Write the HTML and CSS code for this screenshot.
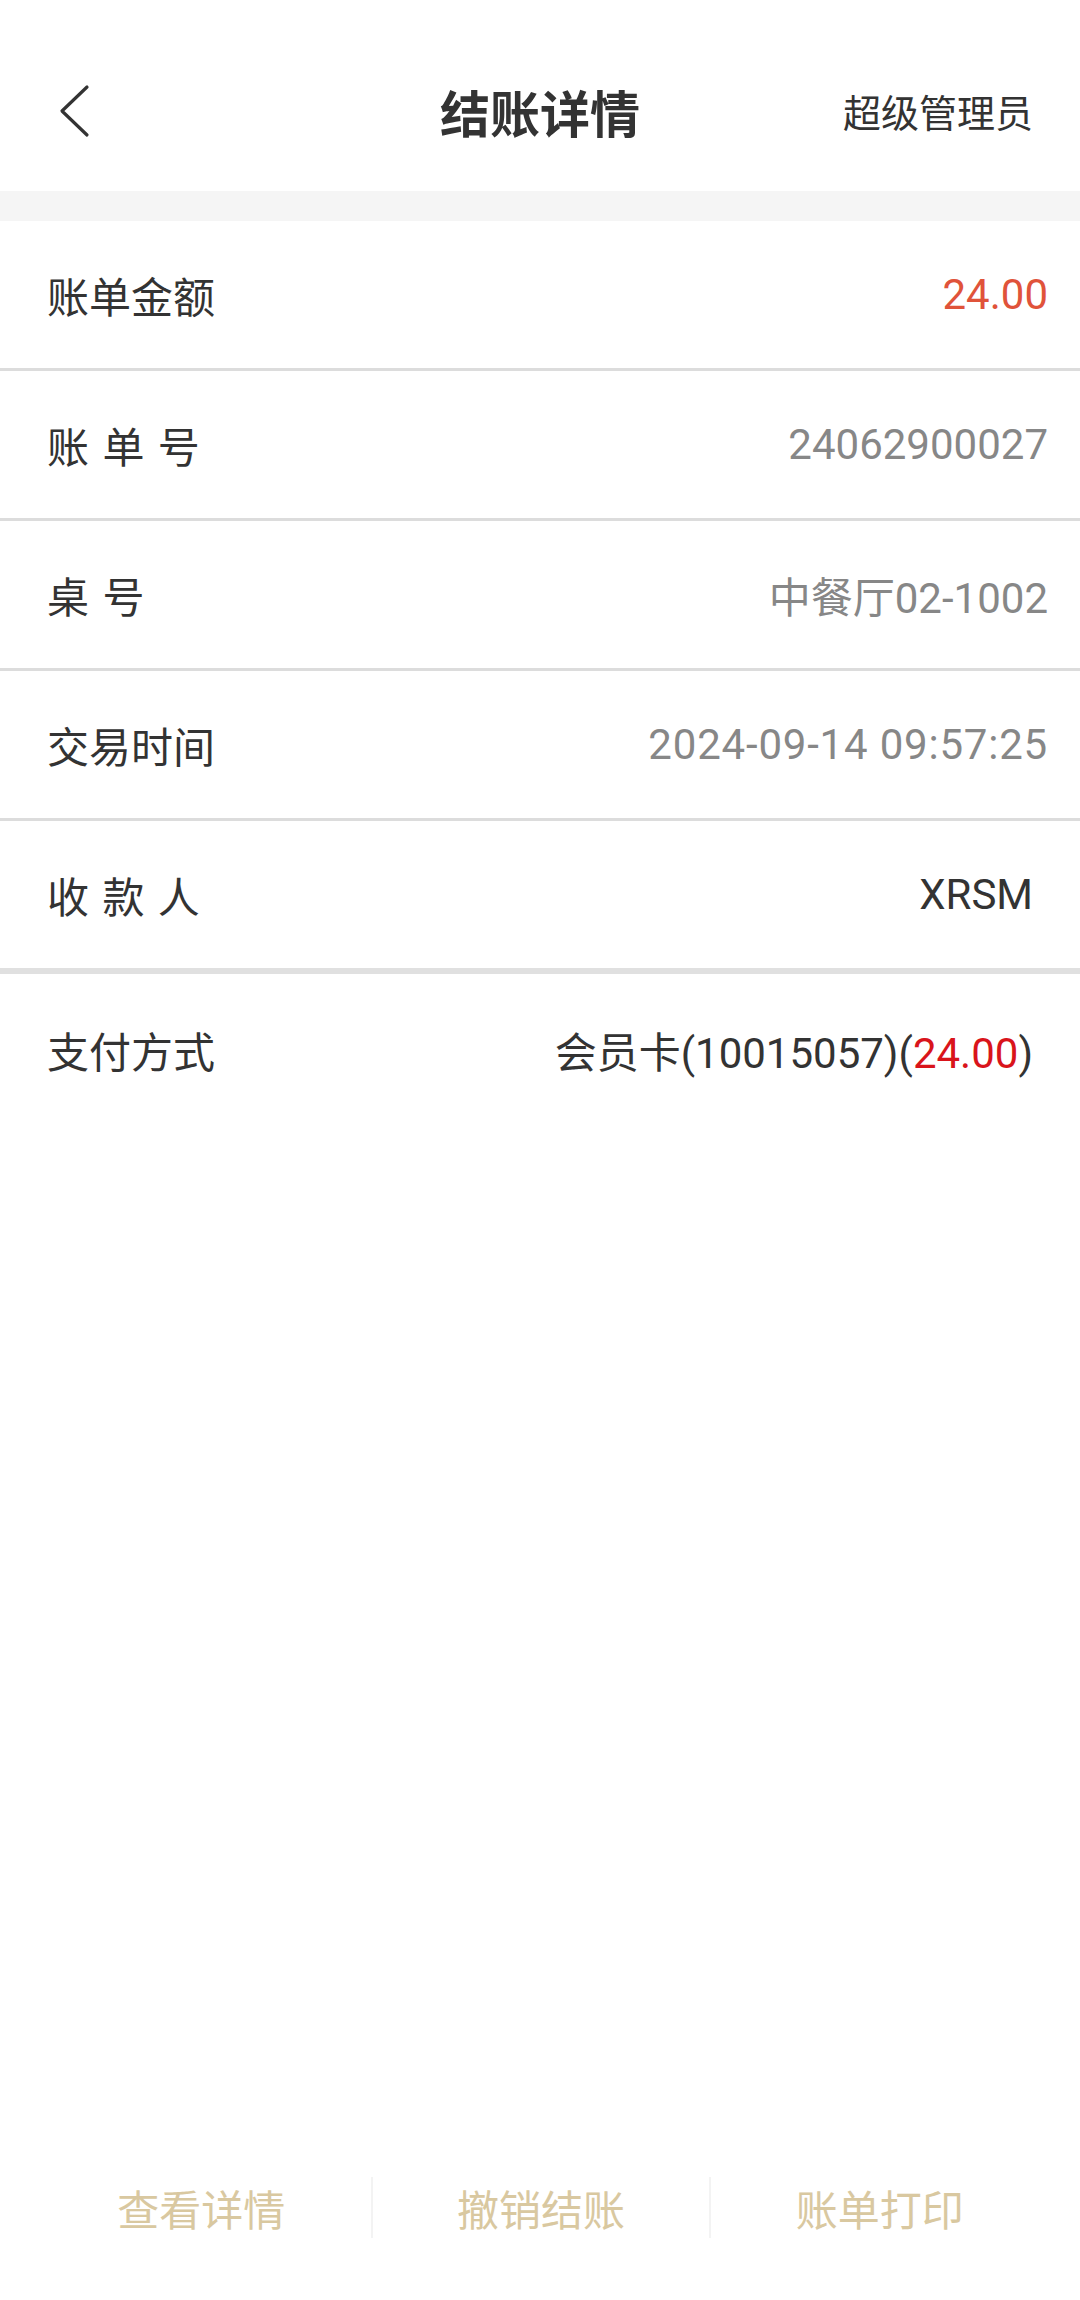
FILE: index.html
```html
<!DOCTYPE html>
<html lang="zh-CN">
<head>
    <meta charset="utf-8">
    <meta name="viewport" content="width=device-width, initial-scale=1.0">
    <title>结账详情</title>
    <link rel="stylesheet" href="styles.css">
</head>
<body>
    <div class="page">
        <header class="topbar">
            <div class="back">
                <svg width="32" height="54" viewBox="0 0 32 54">
                    <polyline points="28,3 3,27 28,51" fill="none" stroke="#333" stroke-width="3.2" stroke-linecap="round" stroke-linejoin="round"/>
                </svg>
            </div>
            <h1 class="title">结账详情</h1>
            <div class="user">超级管理员</div>
        </header>

        <div class="band"></div>

        <main class="detail">
            <div class="row">
                <span class="label">账单金额</span>
                <span class="value amount">24.00</span>
            </div>
            <div class="row">
                <span class="label spaced">账 单 号</span>
                <span class="value">24062900027</span>
            </div>
            <div class="row">
                <span class="label spaced">桌 号</span>
                <span class="value">中餐厅02-1002</span>
            </div>
            <div class="row">
                <span class="label">交易时间</span>
                <span class="value time">2024-09-14 09:57:25</span>
            </div>
            <div class="row row-inset row-thick">
                <span class="label spaced">收 款 人</span>
                <span class="value dark">XRSM</span>
            </div>
            <div class="row row-inset row-last">
                <span class="label">支付方式</span>
                <span class="value dark">会员卡(10015057)(<em class="paid">24.00</em>)</span>
            </div>
        </main>

        <footer class="actions">
            <button class="action">查看详情</button>
            <button class="action">撤销结账</button>
            <button class="action">账单打印</button>
        </footer>
    </div>
</body>
</html>
```

FILE: styles.css
```css
* {
    box-sizing: border-box;
}

body {
    margin: 0;
    background: #fff;
    font-family: Roboto, "Noto Sans CJK SC", sans-serif;
    color: #333;
}

.page {
    display: flex;
    flex-direction: column;
    height: 2300px;
}

/* Top bar */
.topbar {
    display: grid;
    grid-template-columns: 1fr auto 1fr;
    align-items: center;
    height: 191px;
    padding: 30px 47px 0 47px;
}

.back {
    display: flex;
    align-items: center;
    margin-left: 12px;
}

.back svg {
    display: block;
}

.title {
    margin: 0;
    font-family: "Noto Sans CJK SC", sans-serif;
    font-size: 50px;
    font-weight: 700;
    color: #333;
    line-height: 1;
}

.user {
    justify-self: end;
    font-family: "Noto Sans CJK SC", sans-serif;
    font-size: 38px;
    color: #333;
    line-height: 1;
}

.band {
    height: 30px;
    background: #f5f5f5;
}

/* Detail rows */
.detail {
    flex: 1;
}

.row {
    display: flex;
    align-items: center;
    justify-content: space-between;
    height: 150px;
    padding: 0 32px 0 47px;
    border-bottom: 3px solid #dcdcdc;
    font-size: 42px;
}

.row-inset {
    padding-right: 47px;
}

.row-thick {
    height: 153px;
    border-bottom-width: 6px;
    border-bottom-color: #e0e0e0;
}

.row-last {
    border-bottom: none;
}

.label {
    color: #333;
}

.spaced {
    word-spacing: 3px;
}

.value {
    color: #878787;
}

.value.time {
    letter-spacing: 0.8px;
}

.value.dark {
    color: #333;
}

.amount {
    color: #e0533a;
}

.paid {
    font-style: normal;
    color: #d9141b;
}

/* Bottom actions */
.actions {
    display: grid;
    grid-template-columns: repeat(3, 1fr);
    padding: 0 32px;
    margin-bottom: 62px;
}

.action {
    height: 61px;
    border: none;
    background: none;
    font-family: "Noto Sans CJK SC", sans-serif;
    font-size: 42px;
    color: #d9c8a0;
    padding: 0;
    cursor: pointer;
}

.action + .action {
    border-left: 2px solid #f3f3f3;
}
```
